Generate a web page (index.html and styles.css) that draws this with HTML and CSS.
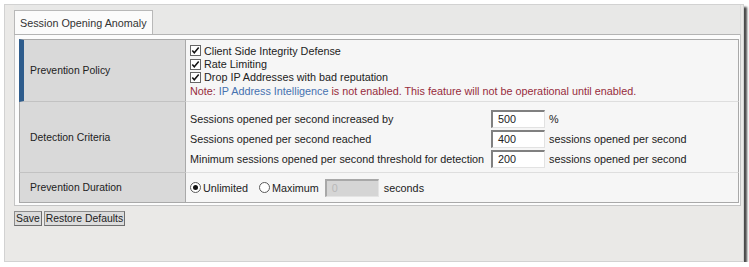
FILE: index.html
```html
<!DOCTYPE html>
<html>

	<head>
		<meta charset="UTF-8">
		<title>Session Opening Anomaly</title>
		<link rel="stylesheet" href="styles.css">
	</head>

	<body>
		<div class="frame">
			<div class="tabs">
				<div class="tab">Session Opening Anomaly</div>
			</div>

			<div class="panel">
				<table class="form">
					<tr class="row-policy">
						<th class="label accent">Prevention Policy</th>
						<td class="value policy">
							<div class="opt">
								<span class="check"><svg width="11" height="11" viewBox="0 0 11 11"><rect x="0.5" y="0.5" width="10" height="10" fill="#fff" stroke="#666"/><path d="M2.3 5.4 L4.3 7.8 L8.7 2.6" fill="none" stroke="#111" stroke-width="1.5"/></svg></span>Client Side Integrity Defense
							</div>
							<div class="opt">
								<span class="check"><svg width="11" height="11" viewBox="0 0 11 11"><rect x="0.5" y="0.5" width="10" height="10" fill="#fff" stroke="#666"/><path d="M2.3 5.4 L4.3 7.8 L8.7 2.6" fill="none" stroke="#111" stroke-width="1.5"/></svg></span>Rate Limiting
							</div>
							<div class="opt">
								<span class="check"><svg width="11" height="11" viewBox="0 0 11 11"><rect x="0.5" y="0.5" width="10" height="10" fill="#fff" stroke="#666"/><path d="M2.3 5.4 L4.3 7.8 L8.7 2.6" fill="none" stroke="#111" stroke-width="1.5"/></svg></span>Drop IP Addresses with bad reputation
							</div>
							<div class="note">Note: <span class="link">IP Address Intelligence</span> is not enabled. This feature will not be operational until enabled.</div>
						</td>
					</tr>

					<tr class="row-criteria">
						<th class="label">Detection Criteria</th>
						<td class="value">
							<div class="criteria">
								<span>Sessions opened per second increased by</span>
								<span class="field">500</span>
								<span>%</span>

								<span>Sessions opened per second reached</span>
								<span class="field">400</span>
								<span>sessions opened per second</span>

								<span>Minimum sessions opened per second threshold for detection</span>
								<span class="field">200</span>
								<span>sessions opened per second</span>
							</div>
						</td>
					</tr>

					<tr class="row-duration">
						<th class="label">Prevention Duration</th>
						<td class="value">
							<div class="duration">
								<span class="radio on"></span><span class="radio-text">Unlimited</span>
								<span class="radio"></span><span class="radio-text last">Maximum</span>
								<span class="field disabled">0</span>
								<span>seconds</span>
							</div>
						</td>
					</tr>
				</table>
			</div>

			<div class="actions">
				<span class="btn">Save</span>
				<span class="btn">Restore Defaults</span>
			</div>
		</div>
	</body>

</html>
```

FILE: styles.css
```css
* {
	margin: 0;
	padding: 0;
	box-sizing: border-box;
}

body {
	background: #fff;
	font-family: "Liberation Sans", Arial, sans-serif;
	font-size: 10.8px;
	color: #222;
}

.frame {
	margin: 4px 0 0 4px;
	width: 740px;
	height: 258px;
	background: #eae9e7;
	border: 1px solid #d2d2d2;
	box-shadow: 3px 3px 2px #4a4a4a;
	padding: 0 2px 0 9px;
}

/* tab strip */
.tabs {
	display: flex;
	align-items: flex-end;
	height: 30px;
	border-bottom: 1px solid #b4b4b4;
	border-right: 1px solid #dcdcdc;
	background: #e8e8e7;
}

.tab {
	height: 24px;
	line-height: 24px;
	padding: 0 5px;
	background: #fbfbfb;
	border: 1px solid #b8b8b8;
	border-bottom: 0;
	color: #333;
}

.panel {
	background: #fcfcfc;
	border: 1px solid #c4c4c4;
	border-top: 0;
	padding: 4px 1px 2px 4px;
}

.form {
	width: 720px;
	border-collapse: separate;
	border-spacing: 0;
}

.label {
	width: 166px;
	background: #d9d9d9;
	border-left: 1px solid #a9a9a9;
	border-bottom: 1px solid #c2c2c2;
	padding-left: 10px;
	text-align: left;
	font-weight: normal;
	font-size: 10.4px;
	color: #222;
	vertical-align: middle;
}

.label.accent {
	border-left: 5px solid #2e5c8c;
	padding-left: 6px;
}

.value {
	background: #f6f6f6;
	border-left: 1px solid #a9a9a9;
	border-right: 1px solid #a9a9a9;
	border-bottom: 1px solid #dedede;
	padding-left: 4px;
	vertical-align: middle;
}

.row-policy th,
.row-policy td {
	border-top: 1px solid #a9a9a9;
	height: 63px;
}

.row-criteria th,
.row-criteria td {
	height: 71px;
}

.row-duration th,
.row-duration td {
	height: 30px;
	border-bottom-color: #a9a9a9;
}

.policy {
	vertical-align: top;
	padding-top: 4px;
}

.opt,
.note {
	display: flex;
	align-items: center;
	height: 13.4px;
}

.check {
	display: inline-flex;
	width: 11px;
	height: 11px;
	margin-right: 3px;
}

.note {
	color: #962c3c;
	white-space: pre;
}

.link {
	color: #4672b0;
}

/* detection criteria grid */
.criteria {
	display: grid;
	grid-template-columns: 297px 54px auto;
	column-gap: 4px;
	row-gap: 2px;
	align-items: center;
	padding-top: 4px;
	padding-bottom: 1px;
}

.field {
	display: block;
	height: 18px;
	line-height: 15px;
	padding-left: 5px;
	background: #fff;
	border-top: 2px solid #808080;
	border-left: 2px solid #808080;
	border-right: 1px solid #e2e2e2;
	border-bottom: 1px solid #e2e2e2;
	color: #222;
}

.field.disabled {
	width: 54px;
	background: #d5d5d5;
	border-top-color: #a8a8a8;
	border-left-color: #a8a8a8;
	border-right-color: #e4e4e4;
	border-bottom-color: #e4e4e4;
	color: #b8b8b8;
}

/* duration radios */
.duration {
	display: flex;
	align-items: center;
}

.radio {
	width: 11px;
	height: 11px;
	border: 1px solid #5a5a5a;
	border-radius: 50%;
	background: #fff;
	margin-right: 2px;
	display: flex;
	align-items: center;
	justify-content: center;
}

.radio.on::after {
	content: "";
	width: 5px;
	height: 5px;
	border-radius: 50%;
	background: #111;
}

.radio-text {
	margin-right: 11px;
}

.radio-text.last {
	margin-right: 6px;
}

.duration .field {
	margin-right: 5px;
}

.actions {
	display: flex;
	gap: 2px;
	margin-top: 5px;
}

.btn {
	display: block;
	height: 15px;
	line-height: 13px;
	padding: 0 1px;
	font-size: 10.4px;
	color: #222;
	background: #dcdcdc;
	border: 1px solid #8c8c8c;
	border-right-color: #6e6e6e;
	border-bottom-color: #6e6e6e;
}
```
